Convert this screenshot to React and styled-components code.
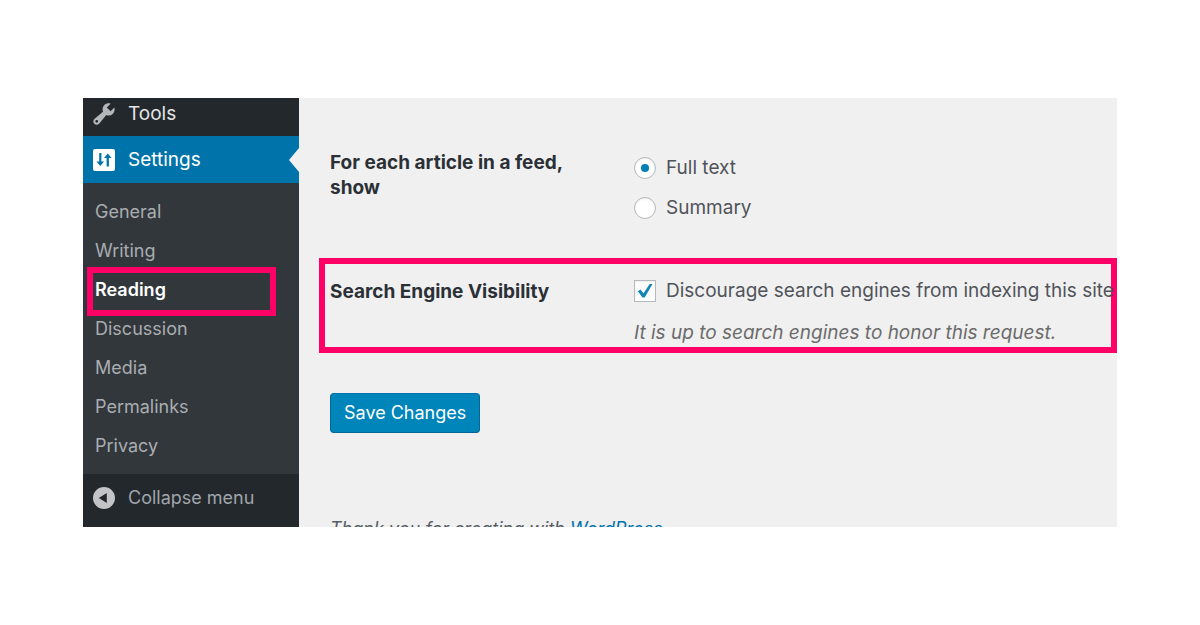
import { useState } from "react";
import styled, { createGlobalStyle, css } from "styled-components";

const GlobalStyle = createGlobalStyle`
  *,
  *::before,
  *::after {
    box-sizing: border-box;
  }

  body {
    margin: 0;
    background: #ffffff;
    font-family: Inter, "Liberation Sans", sans-serif;
    font-size: 19px;
    color: #50545a;
  }
`;

const Page = styled.div`
  padding: 98px 83px;
`;

const Screen = styled.div`
  display: flex;
  overflow: hidden;
  background: #f0f0f0;
`;

// Sidebar
const Sidebar = styled.nav`
  flex: 0 0 216px;
  background: #23282d;
`;

const menuRow = css`
  display: flex;
  align-items: center;
  gap: 12px;
  width: 100%;
  padding: 0 9px;
  font-family: inherit;
  font-size: 19px;
  line-height: 24px;
  text-decoration: none;
`;

const MenuLink = styled.a`
  ${menuRow}
  position: relative;
  padding-top: ${({ $first }) => ($first ? "4px" : "12px")};
  padding-bottom: ${({ $first }) => ($first ? "10px" : "11px")};
  background: ${({ $active }) => ($active ? "#0073aa" : "transparent")};
  color: ${({ $active }) => ($active ? "#ffffff" : "#e4e5e6")};

  svg {
    color: ${({ $active }) => ($active ? "#ffffff" : "#b4b7ba")};
  }

  &::after {
    content: "";
    display: ${({ $active }) => ($active ? "block" : "none")};
    position: absolute;
    top: 50%;
    right: 0;
    margin-top: -12px;
    border: 12px solid transparent;
    border-left-width: 0;
    border-right: 10px solid #f0f0f0;
  }
`;

const Submenu = styled.ul`
  margin: 0;
  padding: 10px 0 8px;
  list-style: none;
  background: #32373c;
`;

const SubmenuItem = styled.li`
  position: relative;

  &::after {
    content: "";
    display: ${({ $marked }) => ($marked ? "block" : "none")};
    position: absolute;
    inset: -4px 23px -6px 4px;
    border: 6px solid #ff0066;
    pointer-events: none;
  }
`;

const SubmenuLink = styled.a`
  display: block;
  padding: 7px 12px 8px;
  font-size: 18px;
  line-height: 24px;
  font-weight: ${({ $current }) => ($current ? 600 : 400)};
  color: ${({ $current }) => ($current ? "#ffffff" : "#a9adb1")};
  text-decoration: none;
`;

const CollapseButton = styled.button`
  ${menuRow}
  padding-top: 12px;
  padding-bottom: 17px;
  border: none;
  background: transparent;
  font-size: 18px;
  color: #a0a5aa;
  cursor: pointer;

  svg {
    color: #c3c4c5;
  }
`;

const Icon = styled.svg`
  flex: none;
  width: 24px;
  height: 24px;
  fill: currentColor;
`;

// Settings form
const Content = styled.main`
  display: flex;
  flex: 1;
  flex-direction: column;
  min-width: 0;
  padding: 50px 0 0 20px;
`;

const Form = styled.form`
  display: flex;
  flex-direction: column;
  align-items: stretch;
`;

const SettingRow = styled.div`
  display: grid;
  grid-template-columns: 304px 1fr;
  padding: 0 11px 30px;

  ${({ $marked }) =>
    $marked &&
    css`
      padding: 7px 0 2px 5px;
      border: 6px solid #ff0066;
    `}
`;

const SettingTitle = styled.div`
  padding: ${({ $single }) => ($single ? "8px" : "2px")} 40px 0 0;
  font-size: 19px;
  line-height: 25px;
  font-weight: 700;
  color: #2b3036;
`;

const Option = styled.label`
  display: flex;
  align-items: center;
  gap: 10px;
  font-size: 19px;
  line-height: 40px;
  white-space: nowrap;
`;

const Choice = styled.input`
  appearance: none;
  display: grid;
  place-content: center;
  flex: none;
  width: 22px;
  height: 22px;
  margin: 0;
  border: 1px solid #b4b9be;
  background: #ffffff;
  box-shadow: inset 0 1px 2px rgba(0, 0, 0, 0.07);
`;

const Radio = styled(Choice).attrs({ type: "radio" })`
  border-radius: 50%;

  &:checked::before {
    content: "";
    width: 8px;
    height: 8px;
    border-radius: 50%;
    background: #0080b5;
  }
`;

const Checkbox = styled(Choice).attrs({ type: "checkbox" })`
  grid-area: 1 / 1;
`;

const CheckboxBox = styled.span`
  display: grid;
  place-items: center;
  flex: none;

  svg {
    grid-area: 1 / 1;
    width: 16px;
    height: 16px;
    color: #1484b8;
    pointer-events: none;
  }
`;

const Description = styled.p`
  margin: 10px 0 0;
  font-size: 19px;
  line-height: 24px;
  font-style: italic;
  color: #6b6b6b;
`;

const SaveButton = styled.button`
  align-self: flex-start;
  margin: 40px 0 0 11px;
  padding: 7px 13px;
  border: 1px solid #006799;
  border-color: #0073aa #006799 #006799;
  border-radius: 4px;
  background: #0085ba;
  font-family: inherit;
  font-size: 18px;
  line-height: 24px;
  color: #ffffff;
  cursor: pointer;
`;

// Only the top of the footer line shows above the fold
const Footer = styled.footer`
  height: 10px;
  margin: 84px 0 0 11px;
  overflow: hidden;
  font-size: 18px;
  line-height: 24px;
  font-style: italic;
  color: #555d66;

  a {
    color: #0073aa;
  }
`;

const ToolsIcon = () => (
  <Icon viewBox="1 1 18 18" aria-hidden="true">
    <path
      fillRule="evenodd"
      d="M16.68 9.77a4.54 4.54 0 0 1-4.95.99l-5.41 6.52c-.99.99-2.59.99-3.58 0s-.99-2.59 0-3.57l6.52-5.42c-.68-1.65-.35-3.61.99-4.95 1.28-1.28 3.12-1.62 4.72-1.06l-2.89 2.89 2.82 2.82 2.86-2.87c.53 1.58.18 3.39-1.08 4.65zM3.81 16.21c.4.39 1.04.39 1.43 0 .4-.4.4-1.04 0-1.43-.39-.4-1.03-.4-1.43 0a1.02 1.02 0 0 0 0 1.43z"
    />
  </Icon>
);

const SettingsIcon = () => (
  <Icon viewBox="0 0 24 24" aria-hidden="true">
    <path
      fillRule="evenodd"
      d="M3 1h18a2 2 0 0 1 2 2v18a2 2 0 0 1-2 2H3a2 2 0 0 1-2-2V3a2 2 0 0 1 2-2zM7.200 5v8.500H4.500L8.300 18l3.800-4.500H9.400V5zM14.600 18.500V10H12l3.800-4.500L19.600 10h-2.700v8.500z"
    />
  </Icon>
);

const CollapseIcon = () => (
  <Icon viewBox="0 0 24 24" aria-hidden="true">
    <path
      fillRule="evenodd"
      d="M12 1a11 11 0 1 1 0 22 11 11 0 0 1 0-22zM14.800 7v10L6.800 12z"
    />
  </Icon>
);

const CheckIcon = () => (
  <Icon viewBox="0 0 16 16" aria-hidden="true">
    <path d="M.8 8.300 3.500 6.500l3 3.800L12.700 1h2.800L7.700 14.500H5.500z" />
  </Icon>
);

const submenu = [
  "General",
  "Writing",
  "Reading",
  "Discussion",
  "Media",
  "Permalinks",
  "Privacy",
];

const App = () => {
  const [feed, setFeed] = useState("full");
  const [discourage, setDiscourage] = useState(true);

  return (
    <>
      <GlobalStyle />
      <Page>
        <Screen>
          <Sidebar>
            <MenuLink href="#tools" $first>
              <ToolsIcon />
              Tools
            </MenuLink>
            <MenuLink href="#settings" $active>
              <SettingsIcon />
              Settings
            </MenuLink>
            <Submenu>
              {submenu.map((name) => (
                <SubmenuItem key={name} $marked={name === "Reading"}>
                  <SubmenuLink
                    href={`#${name.toLowerCase()}`}
                    $current={name === "Reading"}
                  >
                    {name}
                  </SubmenuLink>
                </SubmenuItem>
              ))}
            </Submenu>
            <CollapseButton type="button">
              <CollapseIcon />
              Collapse menu
            </CollapseButton>
          </Sidebar>

          <Content>
            <Form onSubmit={(e) => e.preventDefault()}>
              <SettingRow role="radiogroup" aria-labelledby="feed-title">
                <SettingTitle id="feed-title">
                  For each article in a feed, show
                </SettingTitle>
                <div>
                  <Option>
                    <Radio
                      name="feed"
                      checked={feed === "full"}
                      onChange={() => setFeed("full")}
                    />
                    Full text
                  </Option>
                  <Option>
                    <Radio
                      name="feed"
                      checked={feed === "summary"}
                      onChange={() => setFeed("summary")}
                    />
                    Summary
                  </Option>
                </div>
              </SettingRow>

              <SettingRow $marked>
                <SettingTitle $single>Search Engine Visibility</SettingTitle>
                <div>
                  <Option>
                    <CheckboxBox>
                      <Checkbox
                        checked={discourage}
                        onChange={(e) => setDiscourage(e.target.checked)}
                      />
                      {discourage && <CheckIcon />}
                    </CheckboxBox>
                    Discourage search engines from indexing this site
                  </Option>
                  <Description>
                    It is up to search engines to honor this request.
                  </Description>
                </div>
              </SettingRow>

              <SaveButton type="submit">Save Changes</SaveButton>
            </Form>

            <Footer>
              Thank you for creating with <a href="#wordpress">WordPress</a>.
            </Footer>
          </Content>
        </Screen>
      </Page>
    </>
  );
};

export default App;
